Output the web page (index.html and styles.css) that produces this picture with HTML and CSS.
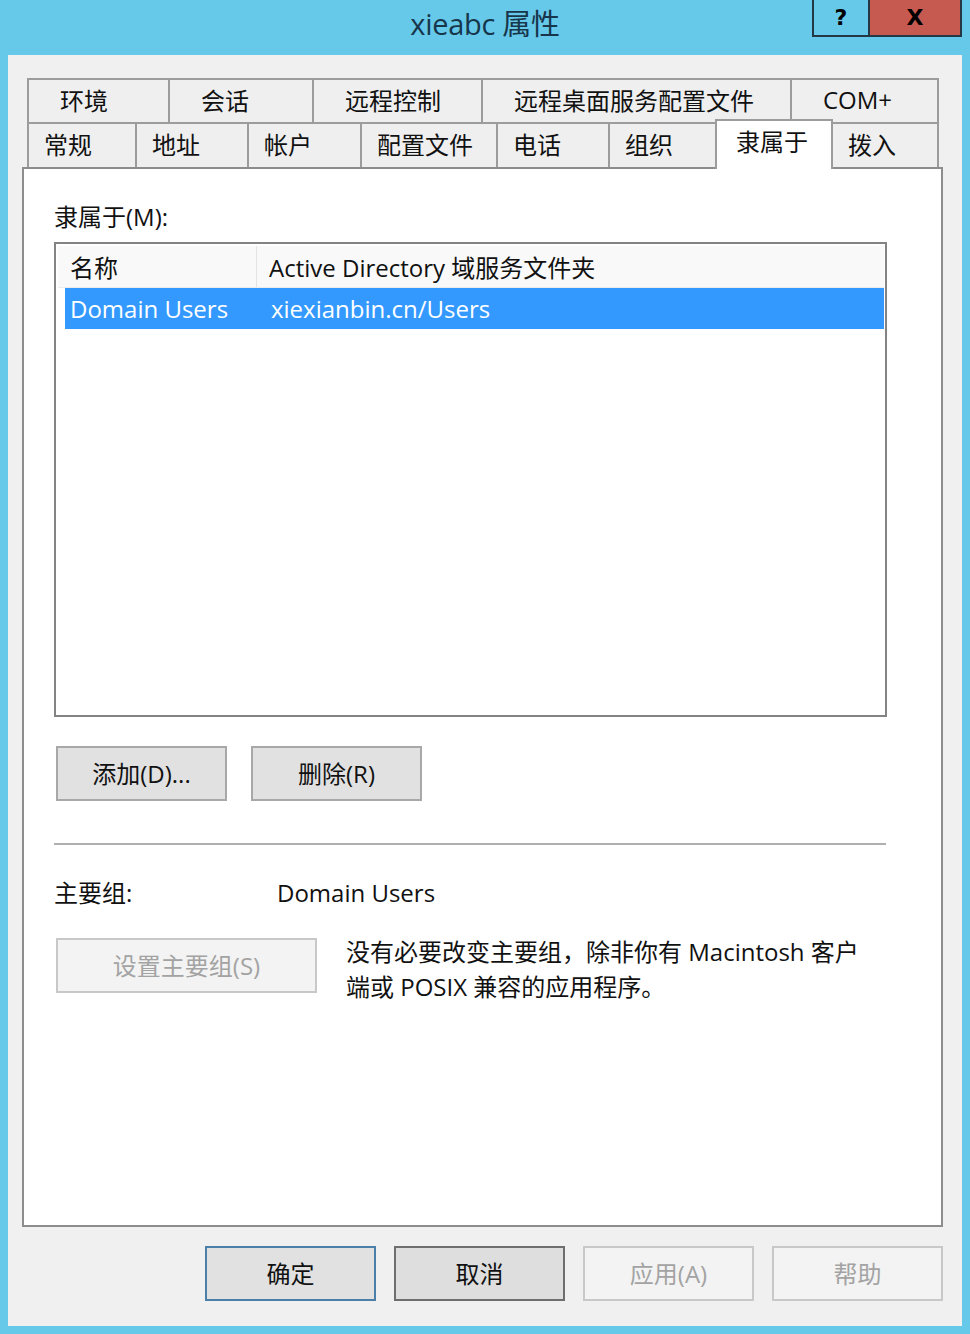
FILE: index.html
```html
<!DOCTYPE html>
<html lang="zh-CN">
<head>
<meta charset="utf-8">
<title>xieabc 属性</title>
<link rel="stylesheet" href="styles.css">
</head>
<body>
<div class="window">
  <div class="titlebar">
    <div class="title">xieabc 属性</div>
    <div class="caption">
      <div class="cap-btn cap-help">?</div>
      <div class="cap-btn cap-close">X</div>
    </div>
  </div>
  <div class="client">
    <div class="tabs">
      <div class="tab-row row1">
        <div class="tab t1 first">环境</div>
        <div class="tab t2">会话</div>
        <div class="tab t3">远程控制</div>
        <div class="tab t4">远程桌面服务配置文件</div>
        <div class="tab t5 last">COM+</div>
      </div>
      <div class="tab-row row2">
        <div class="tab s1 first">常规</div>
        <div class="tab s2">地址</div>
        <div class="tab s3">帐户</div>
        <div class="tab s4">配置文件</div>
        <div class="tab s5">电话</div>
        <div class="tab s6">组织</div>
        <div class="tab s7 selected">隶属于</div>
        <div class="tab s8 last">拨入</div>
      </div>
    </div>
    <div class="panel">
      <div class="label-m">隶属于(M):</div>
      <div class="listbox">
        <div class="lv-head">
          <div class="lv-hcell c1">名称</div>
          <div class="lv-hcell c2">Active Directory 域服务文件夹</div>
        </div>
        <div class="lv-row">
          <div class="lv-cell c1">Domain Users</div>
          <div class="lv-cell c2">xiexianbin.cn/Users</div>
        </div>
      </div>
      <div class="btn-row">
        <div class="btn">添加(D)...</div>
        <div class="btn">删除(R)</div>
      </div>
      <div class="sep"></div>
      <div class="primary">
        <div class="primary-label">主要组:</div>
        <div class="primary-value">Domain Users</div>
      </div>
      <div class="set-row">
        <div class="btn btn-wide disabled">设置主要组(S)</div>
        <div class="desc">没有必要改变主要组，除非你有 Macintosh 客户<br>端或 POSIX 兼容的应用程序。</div>
      </div>
    </div>
    <div class="footer">
      <div class="btn default">确定</div>
      <div class="btn focused">取消</div>
      <div class="btn disabled">应用(A)</div>
      <div class="btn disabled">帮助</div>
    </div>
  </div>
</div>
</body>
</html>
```

FILE: styles.css
```css
html, body {
  margin: 0;
  padding: 0;
}
body {
  width: 970px;
  height: 1334px;
  overflow: hidden;
  background: #66c9e9;
  font-family: "Open Sans", "Noto Sans CJK SC", sans-serif;
  font-size: 24px;
  color: #111;
}
.window {
  display: flex;
  flex-direction: column;
  height: 1334px;
}
.titlebar {
  height: 55px;
  display: grid;
  grid-template-columns: 1fr auto 1fr;
  align-items: start;
}
.title {
  grid-column: 2;
  font-size: 29px;
  line-height: 40px;
  margin-top: 4px;
  color: #17364c;
  letter-spacing: -0.3px;
}
.caption {
  grid-column: 3;
  justify-self: end;
  align-self: start;
  display: flex;
  margin-right: 8px;
}
.cap-btn {
  height: 37px;
  box-sizing: border-box;
  display: flex;
  align-items: center;
  justify-content: center;
  font-family: "DejaVu Sans", sans-serif;
  font-weight: bold;
  color: #000;
}
.cap-help {
  width: 56px;
  border: 2px solid #233745;
  border-top: none;
  border-right: none;
  font-size: 22px;
}
.cap-close {
  width: 94px;
  background: #c75a50;
  border: 2px solid #233745;
  border-top: none;
  font-size: 22px;
}
.client {
  flex: 1;
  margin: 0 8px 8px;
  background: #f0f0f0;
  padding: 23px 0 0 14px;
  display: flex;
  flex-direction: column;
}
.tabs {
  margin-left: 5px;
}
.tab-row {
  display: flex;
}
.row1 {
  height: 44px;
}
.row2 {
  height: 45px;
}
.tab {
  box-sizing: border-box;
  height: 100%;
  background: #efefef;
  border-top: 2px solid #9c9c9c;
  border-right: 2px solid #9c9c9c;
  display: flex;
  align-items: center;
  white-space: nowrap;
  color: #111;
}
.tab.first {
  border-left: 2px solid #9c9c9c;
}
.row1 .tab {
  padding-left: 31px;
  padding-bottom: 4px;
}
.row2 .tab {
  padding-left: 15px;
  padding-bottom: 4px;
}
.t1 { width: 143px; }
.t2 { width: 144px; }
.t3 { width: 169px; }
.t4 { width: 309px; }
.t5 { width: 147px; }
.s1 { width: 110px; }
.s2 { width: 112px; }
.s3 { width: 113px; }
.s4 { width: 136px; }
.s5 { width: 112px; }
.s6 { width: 107px; }
.s7 { width: 116px; }
.s8 { width: 106px; }
.row2 .tab.selected {
  position: relative;
  z-index: 1;
  height: 50px;
  margin-top: -3px;
  background: #fff;
  padding-left: 19px;
  padding-bottom: 10px;
  border-top: 2px solid #9c9c9c;
  border-left: 2px solid #9c9c9c;
  margin-left: -2px;
  width: 118px;
}
.panel {
  box-sizing: border-box;
  width: 921px;
  height: 1060px;
  background: #fff;
  border: 2px solid #8d8d8d;
  padding: 0 0 0 30px;
}
.label-m {
  margin-top: 33px;
  line-height: 30px;
}
.listbox {
  margin-top: 10px;
  box-sizing: border-box;
  width: 833px;
  height: 475px;
  border: 2px solid #838383;
  padding: 2px 1px 0 2px;
}
.lv-head {
  display: flex;
  height: 41px;
  background: #f9f9f9;
  border-bottom: 1px solid #ececec;
}
.lv-hcell {
  display: flex;
  align-items: center;
  white-space: nowrap;
}
.lv-hcell.c1 {
  width: 199px;
  padding-left: 12px;
  box-sizing: border-box;
  border-right: 1px solid #e3e3e3;
}
.lv-hcell.c2 {
  padding-left: 12px;
}
.lv-row {
  display: flex;
  height: 41px;
  margin-left: 7px;
  background: #3399ff;
  color: #fff;
}
.lv-cell {
  display: flex;
  align-items: center;
  white-space: nowrap;
}
.lv-cell.c1 {
  width: 193px;
  padding-left: 5px;
  box-sizing: border-box;
}
.lv-cell.c2 {
  padding-left: 13px;
}
.btn-row {
  display: flex;
  gap: 24px;
  margin-top: 29px;
  margin-left: 2px;
}
.btn {
  box-sizing: border-box;
  width: 171px;
  height: 55px;
  background: #e1e1e1;
  border: 2px solid #a8a8a8;
  display: flex;
  align-items: center;
  justify-content: center;
  padding-bottom: 2px;
  white-space: nowrap;
  color: #111;
}
.btn.disabled {
  background: #f3f3f3;
  border-color: #c8c8c8;
  color: #a3a3a3;
}
.btn.default {
  border-color: #4b7fa8;
}
.btn.focused {
  border-color: #6e6e6e;
  background: #dedede;
}
.btn-wide {
  width: 261px;
}
.sep {
  margin-top: 42px;
  width: 832px;
  height: 2px;
  background: #b0b0b0;
}
.primary {
  display: flex;
  margin-top: 33px;
  line-height: 30px;
}
.primary-label {
  width: 223px;
}
.set-row {
  display: flex;
  margin-top: 30px;
  margin-left: 2px;
}
.desc {
  margin-left: 29px;
  margin-top: -4px;
  line-height: 35px;
  white-space: nowrap;
}
.footer {
  display: flex;
  justify-content: flex-end;
  gap: 18px;
  margin-top: 19px;
  padding-right: 19px;
}
```
